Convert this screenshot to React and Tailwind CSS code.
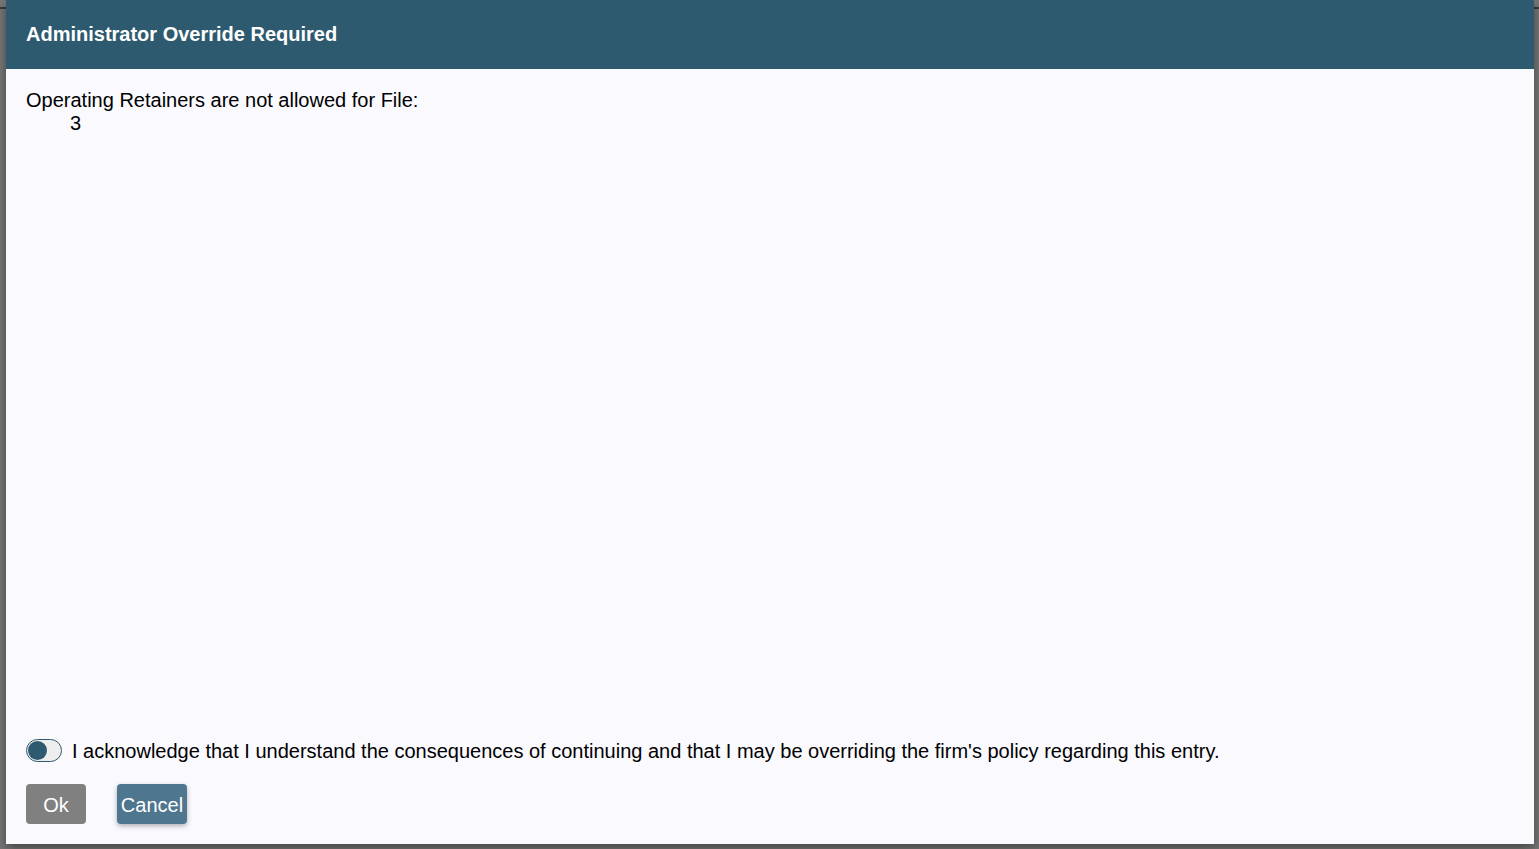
export default function App() {
  return (
    <div className="relative h-[849px] w-full overflow-hidden bg-[#777777] font-['Liberation_Sans',Arial,sans-serif]">
      {/* page behind the overlay */}
      <div className="h-[9px] border-b-2 border-[#3a3a3a]" />

      {/* dialog */}
      <div className="absolute left-[6px] top-0 flex h-[844px] w-[1528px] flex-col bg-[#f9f9fe] shadow-[0_4px_10px_rgba(0,0,0,0.45)]">
        <div className="flex h-[69px] items-center bg-[#2e5a70] px-5 pb-[2px]">
          <h2 className="text-[20px] font-bold text-white">Administrator Override Required</h2>
        </div>

        <div className="flex flex-1 flex-col px-5 pt-[20px] text-[20px] leading-[23px] text-black">
          <div>Operating Retainers are not allowed for File:</div>
          <div className="pl-[44px]">3</div>
        </div>

        <div className="flex flex-col px-5 pb-5">
          <label className="flex h-[23px] items-center gap-[10px] text-[20px] leading-[23px] text-black">
            <span className="flex h-[23px] w-[36px] items-center rounded-full border border-[#2e5a70] bg-[#eeeeee] p-[1px]">
              <span className="h-[19px] w-[19px] rounded-full bg-[#2e5a70]" />
            </span>
            <span className="pt-[1px]">I acknowledge that I understand the consequences of continuing and that I may be overriding the firm's policy regarding this entry.</span>
          </label>
          <div className="mt-[22px] flex gap-[31px]">
            <button className="h-[40px] w-[60px] rounded bg-[#808080] pt-[2px] text-[20px] text-white">Ok</button>
            <button className="h-[40px] w-[70px] rounded bg-[#4e768f] pt-[2px] text-[20px] text-white shadow-[0_2px_5px_rgba(0,0,0,0.3)]">Cancel</button>
          </div>
        </div>
      </div>
    </div>
  );
}
